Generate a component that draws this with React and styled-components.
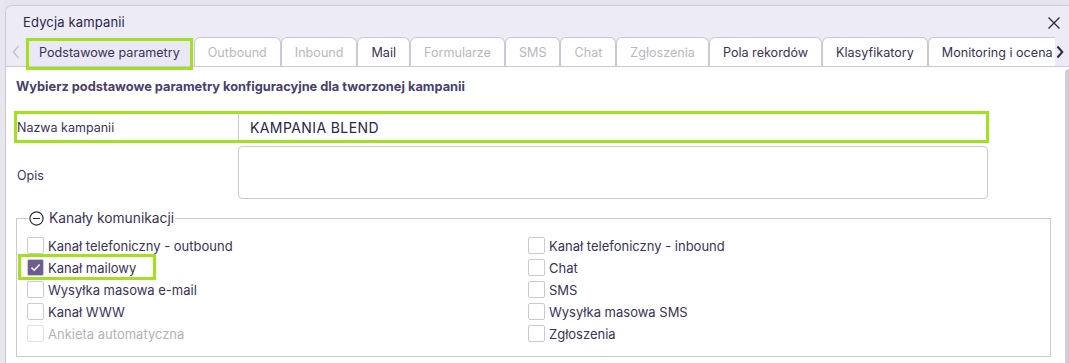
import React from "react";
import styled, { createGlobalStyle, css } from "styled-components";

const GREEN = "#a2e21d";
const BORDER = "#c9c8dc";
const TEXT = "#3b3257";

const Global = createGlobalStyle`
  html, body { margin: 0; padding: 0; overflow: hidden; }
  body {
    background: #e6e5ee;
    font-family: Inter, "Open Sans", "Noto Sans", sans-serif;
    color: ${TEXT};
  }
  *, *::before, *::after { box-sizing: border-box; }
`;

const Page = styled.div`
  width: 1069px;
  height: 363px;
  padding: 5px 0 0 5px;
  background: linear-gradient(90deg, #e8e6ef 0 5px, #e6e5ee 5px);
`;

const Dialog = styled.div`
  width: 1070px;
  height: 358px;
  background: #fff;
  border: 1px solid ${BORDER};
  border-bottom: none;
  border-radius: 7px 7px 0 0;
  overflow: hidden;
  display: flex;
  flex-direction: column;
`;

const Header = styled.div`
  background: #ecebf6;
  border-bottom: 1px solid ${BORDER};
  position: relative;
  z-index: 1;
`;

const TitleRow = styled.div`
  height: 31px;
  display: flex;
  align-items: center;
  justify-content: space-between;
  padding: 0 6px 0 17px;
`;

const Title = styled.div`
  font-size: 13px;
  font-weight: 400;
  color: #2c2843;
  padding-top: 1px;
  letter-spacing: 0.15px;
`;

const CloseBtn = styled.button`
  border: 0;
  background: transparent;
  width: 14px;
  height: 14px;
  padding: 0;
  margin-right: 7px;
  margin-top: 2px;
  display: flex;
  cursor: pointer;
`;

const TabsRow = styled.div`
  height: 29px;
  display: flex;
  align-items: stretch;
`;

const Arrow = styled.div`
  width: ${(p) => p.$w}px;
  flex-shrink: 0;
  display: flex;
  align-items: center;
  justify-content: center;
`;

const TabStrip = styled.div`
  flex: 1;
  min-width: 0;
  display: flex;
  clip-path: inset(0 0 -6px 0);
`;

const Tab = styled.div`
  flex-shrink: 0;
  position: relative;
  height: 29px;
  padding: 0 13px;
  display: flex;
  align-items: center;
  font-size: 12.6px;
  font-weight: 400;
  white-space: nowrap;
  border: 1px solid ${BORDER};
  border-bottom: none;
  border-radius: 6px 6px 0 0;
  background: #fff;
  color: ${(p) => (p.$disabled ? "#b9b8c0" : TEXT)};
  ${(p) =>
    p.$active &&
    css`
      background: #e9e8f4;
      border-color: transparent;
      border-radius: 0;
      &::after {
        content: "";
        position: absolute;
        left: 0;
        right: 0;
        top: 0;
        bottom: -4px;
        border: 3px solid ${GREEN};
      }
    `}
`;

const Body = styled.div`
  flex: 1;
  display: flex;
  min-height: 0;
`;

const Main = styled.div`
  flex: 1;
  padding: 0 10px 0 8px;
`;

const Scrollbar = styled.div`
  width: 9px;
  padding-top: 2px;
  flex-shrink: 0;
`;

const Thumb = styled.div`
  height: 100%;
  background: #cfced9;
  border-radius: 4px 4px 0 0;
`;

const Intro = styled.div`
  font-size: 12.8px;
  font-weight: 700;
  color: #4a3f6a;
  margin: 12px 0 0 2px;
  height: 16px;
  line-height: 16px;
`;

const FieldRow = styled.div`
  display: grid;
  grid-template-columns: 221px 748px;
  align-items: center;
  width: 975px;
  border: 3px solid ${(p) => (p.$highlight ? GREEN : "transparent")};
`;

const NameRow = styled(FieldRow)`
  margin-top: 16px;
  height: 32px;
`;

const OpisRow = styled(FieldRow)`
  border-width: 0 3px;
  margin-top: 3px;
  height: 53px;
`;

const Label = styled.div`
  font-size: 12.5px;
  color: ${TEXT};
  padding-top: ${(p) => p.$pt || 0}px;
`;

const TextInput = styled.div`
  height: 26px;
  border-left: 1px solid ${BORDER};
  display: flex;
  align-items: center;
  padding-left: 11px;
  font-size: 14px;
  font-weight: 400;
  color: #2c2547;
  letter-spacing: 0.4px;
`;

const TextArea = styled.div`
  height: 53px;
  width: 750px;
  border: 1px solid ${BORDER};
  border-radius: 4px;
`;

const Fieldset = styled.fieldset`
  margin: 11px 0 0 2px;
  width: 1035px;
  border: 1px solid ${BORDER};
  padding: 11px 0 14px 10px;
  display: grid;
  grid-template-columns: 501px 1fr;
`;

const Legend = styled.legend`
  display: flex;
  align-items: center;
  gap: 5px;
  padding: 0 1px;
  margin-left: 1px;
  font-size: 13.8px;
  color: ${TEXT};
  line-height: 16px;
`;

const Column = styled.div`
  display: flex;
  flex-direction: column;
  gap: 5px;
`;

const CheckItem = styled.label`
  position: relative;
  display: flex;
  align-items: center;
  gap: 4px;
  height: 17px;
  font-size: 13px;
  color: ${(p) => (p.$disabled ? "#b3b2bb" : TEXT)};
  width: max-content;
  ${(p) =>
    p.$highlight &&
    css`
      &::before {
        content: "";
        position: absolute;
        left: -9px;
        top: -5px;
        width: 138px;
        height: 26px;
        border: 3px solid ${GREEN};
      }
    `}
`;

const Box = styled.span`
  width: 17px;
  height: 17px;
  border: 1px solid ${(p) => (p.$disabled ? "#e0dfe8" : BORDER)};
  border-radius: 2px;
  background: ${(p) => (p.$checked ? "#6f5c8b" : "#fff")};
  display: flex;
  align-items: center;
  justify-content: center;
  flex-shrink: 0;
`;

const tabs = [
  { t: "Podstawowe parametry", active: true },
  { t: "Outbound", disabled: true },
  { t: "Inbound", disabled: true },
  { t: "Mail" },
  { t: "Formularze", disabled: true },
  { t: "SMS", disabled: true },
  { t: "Chat", disabled: true },
  { t: "Zgłoszenia", disabled: true },
  { t: "Pola rekordów" },
  { t: "Klasyfikatory" },
  { t: "Monitoring i ocena" },
];

const left = [
  { t: "Kanał telefoniczny - outbound" },
  { t: "Kanał mailowy", checked: true, highlight: true },
  { t: "Wysyłka masowa e-mail" },
  { t: "Kanał WWW" },
  { t: "Ankieta automatyczna", disabled: true },
];
const right = [
  { t: "Kanał telefoniczny - inbound" },
  { t: "Chat" },
  { t: "SMS" },
  { t: "Wysyłka masowa SMS" },
  { t: "Zgłoszenia" },
];

function Check({ item }) {
  return (
    <CheckItem $disabled={item.disabled} $highlight={item.highlight}>
      <Box $checked={item.checked} $disabled={item.disabled}>
        {item.checked && (
          <svg width="11" height="9" viewBox="0 0 11 9">
            <path d="M1.5 4.6 L4.2 7.2 L9.6 1.6" fill="none" stroke="#fff" strokeWidth="1.5" />
          </svg>
        )}
      </Box>
      {item.t}
    </CheckItem>
  );
}

export default function App() {
  return (
    <Page>
      <Global />
      <Dialog>
        <Header>
          <TitleRow>
            <Title>Edycja kampanii</Title>
            <CloseBtn aria-label="close">
              <svg width="14" height="14" viewBox="0 0 14 14">
                <path d="M1.5 1.5 L12.5 12.5 M12.5 1.5 L1.5 12.5" stroke="#2c2843" strokeWidth="1.3" />
              </svg>
            </CloseBtn>
          </TitleRow>
          <TabsRow>
            <Arrow $w={19}>
              <svg width="8" height="14" viewBox="0 0 8 14">
                <path d="M6.5 1 L1.5 7 L6.5 13" fill="none" stroke="#c4c3cc" strokeWidth="1.4" />
              </svg>
            </Arrow>
            <TabStrip>
              {tabs.map((x) => (
                <Tab key={x.t} $active={x.active} $disabled={x.disabled}>
                  {x.t}
                </Tab>
              ))}
            </TabStrip>
            <Arrow $w={19}>
              <svg width="8" height="14" viewBox="0 0 8 14" style={{ marginRight: 9 }}>
                <path d="M1.5 1.5 L6.3 7 L1.5 12.5" fill="none" stroke="#2c2843" strokeWidth="2" />
              </svg>
            </Arrow>
          </TabsRow>
        </Header>
        <Body>
          <Main>
            <Intro>Wybierz podstawowe parametry konfiguracyjne dla tworzonej kampanii</Intro>
            <NameRow $highlight>
              <Label>Nazwa kampanii</Label>
              <TextInput>KAMPANIA BLEND</TextInput>
            </NameRow>
            <OpisRow>
              <Label $pt={5}>Opis</Label>
              <TextArea />
            </OpisRow>
            <Fieldset>
              <Legend>
                <svg width="15" height="15" viewBox="0 0 15 15">
                  <circle cx="7.5" cy="7.5" r="6.6" fill="none" stroke="#2c2843" strokeWidth="1.2" />
                  <path d="M4 7.5 H11" stroke="#2c2843" strokeWidth="1.2" />
                </svg>
                Kanały komunikacji
              </Legend>
              <Column>
                {left.map((i) => (
                  <Check key={i.t} item={i} />
                ))}
              </Column>
              <Column>
                {right.map((i) => (
                  <Check key={i.t} item={i} />
                ))}
              </Column>
            </Fieldset>
          </Main>
          <Scrollbar>
            <Thumb />
          </Scrollbar>
        </Body>
      </Dialog>
    </Page>
  );
}
